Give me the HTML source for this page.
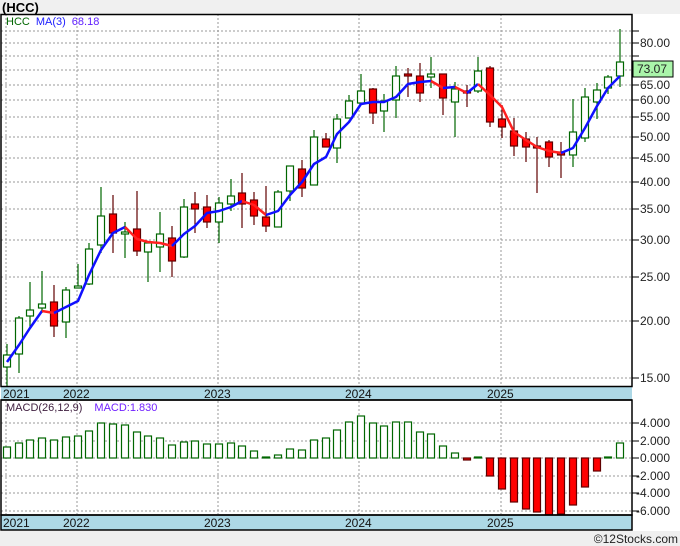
<!DOCTYPE html>
<html><head><meta charset="utf-8"><style>
html,body{margin:0;padding:0;background:#fff;}
svg{display:block;font-family:"Liberation Sans",sans-serif;}
</style></head><body>
<svg width="680" height="546" viewBox="0 0 680 546" xmlns="http://www.w3.org/2000/svg">
<rect x="0" y="0" width="680" height="546" fill="#fff"/>
<rect x="0" y="0" width="680" height="14" fill="#f0f0f0"/>
<text x="2" y="12" font-size="13" font-weight="bold" fill="#000">(HCC)</text>
<rect x="0" y="531" width="680" height="15" fill="#efefef"/>
<text x="678" y="543" font-size="12" fill="#222" text-anchor="end">©12Stocks.com</text>

<!-- price grid -->
<g stroke="#999" stroke-dasharray="2,2" stroke-width="1">
<line x1="1" x2="632" y1="31" y2="31"/><line x1="1" x2="632" y1="43" y2="43"/><line x1="1" x2="632" y1="56" y2="56"/><line x1="1" x2="632" y1="70" y2="70"/><line x1="1" x2="632" y1="85" y2="85"/><line x1="1" x2="632" y1="100" y2="100"/><line x1="1" x2="632" y1="117" y2="117"/><line x1="1" x2="632" y1="137" y2="137"/><line x1="1" x2="632" y1="158" y2="158"/><line x1="1" x2="632" y1="182" y2="182"/><line x1="1" x2="632" y1="209" y2="209"/><line x1="1" x2="632" y1="240" y2="240"/><line x1="1" x2="632" y1="277" y2="277"/><line x1="1" x2="632" y1="321" y2="321"/><line x1="1" x2="632" y1="378" y2="378"/>
<line x1="6" x2="6" y1="14" y2="386"/><line x1="77" x2="77" y1="14" y2="386"/><line x1="218" x2="218" y1="14" y2="386"/><line x1="359" x2="359" y1="14" y2="386"/><line x1="501" x2="501" y1="14" y2="386"/>
<line x1="1" x2="632" y1="423" y2="423"/><line x1="1" x2="632" y1="441" y2="441"/><line x1="1" x2="632" y1="458" y2="458"/><line x1="1" x2="632" y1="476" y2="476"/><line x1="1" x2="632" y1="493" y2="493"/><line x1="1" x2="632" y1="511" y2="511"/>
<line x1="6" x2="6" y1="401" y2="514"/><line x1="77" x2="77" y1="401" y2="514"/><line x1="218" x2="218" y1="401" y2="514"/><line x1="359" x2="359" y1="401" y2="514"/><line x1="501" x2="501" y1="401" y2="514"/>
</g>

<!-- right ticks -->
<g stroke="#000" stroke-width="1">
<line x1="632" x2="639" y1="31" y2="31"/><line x1="632" x2="639" y1="43" y2="43"/><line x1="632" x2="639" y1="56" y2="56"/><line x1="632" x2="639" y1="70" y2="70"/><line x1="632" x2="639" y1="85" y2="85"/><line x1="632" x2="639" y1="100" y2="100"/><line x1="632" x2="639" y1="117" y2="117"/><line x1="632" x2="639" y1="137" y2="137"/><line x1="632" x2="639" y1="158" y2="158"/><line x1="632" x2="639" y1="182" y2="182"/><line x1="632" x2="639" y1="209" y2="209"/><line x1="632" x2="639" y1="240" y2="240"/><line x1="632" x2="639" y1="277" y2="277"/><line x1="632" x2="639" y1="321" y2="321"/><line x1="632" x2="639" y1="378" y2="378"/>
<line x1="632" x2="639" y1="423" y2="423"/><line x1="632" x2="639" y1="441" y2="441"/><line x1="632" x2="639" y1="458" y2="458"/><line x1="632" x2="639" y1="476" y2="476"/><line x1="632" x2="639" y1="493" y2="493"/><line x1="632" x2="639" y1="511" y2="511"/>
</g>
<g font-size="12" fill="#222">
<text x="640" y="47">80.00</text><text x="640" y="89">65.00</text><text x="640" y="104">60.00</text><text x="640" y="121">55.00</text><text x="640" y="141">50.00</text><text x="640" y="162">45.00</text><text x="640" y="186">40.00</text><text x="640" y="213">35.00</text><text x="640" y="244">30.00</text><text x="640" y="281">25.00</text><text x="640" y="325">20.00</text><text x="640" y="382">15.00</text>
<text x="640" y="427">4.000</text><text x="640" y="445">2.000</text><text x="640" y="462">0.000</text><text x="636" y="480">-2.000</text><text x="636" y="497">-4.000</text><text x="636" y="515">-6.000</text>
</g>
<rect x="633" y="61" width="40" height="16" fill="#aaf5aa" stroke="#000"/>
<text x="637" y="73" font-size="12" fill="#222">73.07</text>

<!-- candles -->
<g stroke-width="1.2">
<g stroke="#006600" fill="#fff">
<line x1="7" x2="7" y1="344" y2="387"/><rect x="3.5" y="355" width="7" height="12"/>
<line x1="19" x2="19" y1="316" y2="373"/><rect x="15.5" y="318" width="7" height="36"/>
<line x1="30" x2="30" y1="282" y2="327"/><rect x="26.5" y="310" width="7" height="6"/>
<line x1="42" x2="42" y1="271" y2="313"/><rect x="38.5" y="304" width="7" height="4"/>
<line x1="66" x2="66" y1="287" y2="338"/><rect x="62.5" y="290" width="7" height="32"/>
<line x1="78" x2="78" y1="264" y2="288"/><rect x="74.5" y="286" width="7" height="2"/>
<line x1="89" x2="89" y1="243" y2="285"/><rect x="85.5" y="249" width="7" height="35"/>
<line x1="101" x2="101" y1="187" y2="253"/><rect x="97.5" y="216" width="7" height="29"/>
<line x1="125" x2="125" y1="222" y2="258"/><rect x="121.5" y="232" width="7" height="2"/>
<line x1="148" x2="148" y1="243" y2="282"/><rect x="144.5" y="243" width="7" height="9"/>
<line x1="160" x2="160" y1="212" y2="272"/><rect x="156.5" y="234" width="7" height="13"/>
<line x1="184" x2="184" y1="199" y2="258"/><rect x="180.5" y="207" width="7" height="50"/>
<line x1="219" x2="219" y1="197" y2="243"/><rect x="215.5" y="203" width="7" height="19"/>
<line x1="231" x2="231" y1="179" y2="211"/><rect x="227.5" y="196" width="7" height="8"/>
<line x1="278" x2="278" y1="190" y2="227"/><rect x="274.5" y="192" width="7" height="35"/>
<line x1="290" x2="290" y1="166" y2="201"/><rect x="286.5" y="166" width="7" height="25"/>
<line x1="314" x2="314" y1="130" y2="185"/><rect x="310.5" y="137" width="7" height="48"/>
<line x1="337" x2="337" y1="114" y2="163"/><rect x="333.5" y="119" width="7" height="29"/>
<line x1="349" x2="349" y1="95" y2="118"/><rect x="345.5" y="101" width="7" height="17"/>
<line x1="361" x2="361" y1="74" y2="103"/><rect x="357.5" y="91" width="7" height="12"/>
<line x1="384" x2="384" y1="94" y2="132"/><rect x="380.5" y="101" width="7" height="10"/>
<line x1="396" x2="396" y1="66" y2="118"/><rect x="392.5" y="76" width="7" height="24"/>
<line x1="431" x2="431" y1="57" y2="88"/><rect x="427.5" y="74" width="7" height="3"/>
<line x1="455" x2="455" y1="82" y2="137"/><rect x="451.5" y="89" width="7" height="13"/>
<line x1="478" x2="478" y1="57" y2="93"/><rect x="474.5" y="71" width="7" height="20"/>
<line x1="573" x2="573" y1="99" y2="167"/><rect x="569.5" y="132" width="7" height="23"/>
<line x1="585" x2="585" y1="88" y2="142"/><rect x="581.5" y="97" width="7" height="41"/>
<line x1="597" x2="597" y1="83" y2="119"/><rect x="593.5" y="90" width="7" height="12"/>
<line x1="608" x2="608" y1="75" y2="94"/><rect x="604.5" y="77" width="7" height="11"/>
<line x1="620" x2="620" y1="29" y2="87"/><rect x="616.5" y="62" width="7" height="14"/>
</g>
<g stroke="#600000" fill="#ff0000">
<line x1="54" x2="54" y1="285" y2="337"/><rect x="50.5" y="302" width="7" height="24"/>
<line x1="113" x2="113" y1="195" y2="253"/><rect x="109.5" y="214" width="7" height="19"/>
<line x1="137" x2="137" y1="191" y2="256"/><rect x="133.5" y="229" width="7" height="22"/>
<line x1="172" x2="172" y1="226" y2="277"/><rect x="168.5" y="238" width="7" height="23"/>
<line x1="195" x2="195" y1="192" y2="233"/><rect x="191.5" y="204" width="7" height="5"/>
<line x1="207" x2="207" y1="195" y2="228"/><rect x="203.5" y="207" width="7" height="15"/>
<line x1="242" x2="242" y1="173" y2="228"/><rect x="238.5" y="193" width="7" height="11"/>
<line x1="254" x2="254" y1="192" y2="225"/><rect x="250.5" y="200" width="7" height="16"/>
<line x1="266" x2="266" y1="186" y2="232"/><rect x="262.5" y="217" width="7" height="9"/>
<line x1="302" x2="302" y1="160" y2="197"/><rect x="298.5" y="169" width="7" height="19"/>
<line x1="326" x2="326" y1="133" y2="147"/><rect x="322.5" y="139" width="7" height="8"/>
<line x1="373" x2="373" y1="88" y2="124"/><rect x="369.5" y="89" width="7" height="24"/>
<line x1="408" x2="408" y1="68" y2="97"/><rect x="404.5" y="74" width="7" height="2"/>
<line x1="420" x2="420" y1="63" y2="102"/><rect x="416.5" y="76" width="7" height="17"/>
<line x1="443" x2="443" y1="74" y2="115"/><rect x="439.5" y="74" width="7" height="24"/>
<line x1="467" x2="467" y1="85" y2="107"/><rect x="463.5" y="91" width="7" height="2"/>
<line x1="490" x2="490" y1="66" y2="127"/><rect x="486.5" y="68" width="7" height="54"/>
<line x1="502" x2="502" y1="105" y2="138"/><rect x="498.5" y="119" width="7" height="8"/>
<line x1="514" x2="514" y1="118" y2="156"/><rect x="510.5" y="131" width="7" height="15"/>
<line x1="526" x2="526" y1="132" y2="162"/><rect x="522.5" y="139" width="7" height="8"/>
<line x1="537" x2="537" y1="137" y2="193"/><rect x="533.5" y="146" width="7" height="2"/>
<line x1="549" x2="549" y1="140" y2="167"/><rect x="545.5" y="142" width="7" height="15"/>
<line x1="561" x2="561" y1="142" y2="178"/><rect x="557.5" y="152" width="7" height="3"/>
</g>
</g>

<!-- MA -->
<g fill="none" stroke-width="2.5" stroke-linejoin="round">
<polyline stroke="#1010ff" points="7,362 19,345 30,328 42,311"/>
<polyline stroke="#ff2020" points="42,311 54,313"/>
<polyline stroke="#1010ff" points="54,313 66,307 78,301 89,275 101,250 113,233 125,227"/>
<polyline stroke="#ff2020" points="125,227 137,239 148,242 160,243 172,246"/>
<polyline stroke="#1010ff" points="172,246 184,234 195,226 207,213 219,211 231,207 242,201"/>
<polyline stroke="#ff2020" points="242,201 254,205 266,215"/>
<polyline stroke="#1010ff" points="266,215 278,211 290,195 302,182 314,164 326,157 337,134 349,122 361,104 373,102 384,102 396,97 408,84 420,82 431,81"/>
<polyline stroke="#ff2020" points="431,81 443,88"/>
<polyline stroke="#1010ff" points="443,88 455,87"/>
<polyline stroke="#ff2020" points="455,87 467,93"/>
<polyline stroke="#1010ff" points="467,93 478,84"/>
<polyline stroke="#ff2020" points="478,84 490,95 502,107 514,132 526,140 537,147 549,151 561,153"/>
<polyline stroke="#1010ff" points="561,153 573,148 585,128 597,106 608,88 620,76"/>
</g>

<!-- MACD bars -->
<g stroke="#006600" fill="#fff" stroke-width="1.2">
<rect x="3.5" y="447" width="7" height="11"/><rect x="15.5" y="443" width="7" height="15"/><rect x="26.5" y="440" width="7" height="18"/><rect x="38.5" y="438" width="7" height="20"/><rect x="50.5" y="440" width="7" height="18"/><rect x="62.5" y="437" width="7" height="21"/><rect x="74.5" y="436" width="7" height="22"/><rect x="85.5" y="431" width="7" height="27"/><rect x="97.5" y="423" width="7" height="35"/><rect x="109.5" y="424" width="7" height="34"/><rect x="121.5" y="425" width="7" height="33"/><rect x="133.5" y="432" width="7" height="26"/><rect x="144.5" y="436" width="7" height="22"/><rect x="156.5" y="438" width="7" height="20"/><rect x="168.5" y="445" width="7" height="13"/><rect x="180.5" y="442" width="7" height="16"/><rect x="191.5" y="441" width="7" height="17"/><rect x="203.5" y="444" width="7" height="14"/><rect x="215.5" y="444" width="7" height="14"/><rect x="227.5" y="443" width="7" height="15"/><rect x="238.5" y="446" width="7" height="12"/><rect x="250.5" y="451" width="7" height="7"/><rect x="262.5" y="457" width="7" height="1"/><rect x="274.5" y="455" width="7" height="3"/><rect x="286.5" y="449" width="7" height="9"/><rect x="298.5" y="450" width="7" height="8"/><rect x="310.5" y="440" width="7" height="18"/><rect x="322.5" y="438" width="7" height="20"/><rect x="333.5" y="430" width="7" height="28"/><rect x="345.5" y="422" width="7" height="36"/><rect x="357.5" y="416" width="7" height="42"/><rect x="369.5" y="423" width="7" height="35"/><rect x="380.5" y="426" width="7" height="32"/><rect x="392.5" y="422" width="7" height="36"/><rect x="404.5" y="422" width="7" height="36"/><rect x="416.5" y="432" width="7" height="26"/><rect x="427.5" y="434" width="7" height="24"/><rect x="439.5" y="446" width="7" height="12"/><rect x="451.5" y="453" width="7" height="5"/><rect x="474.5" y="457" width="7" height="1"/><rect x="604.5" y="457" width="7" height="1"/><rect x="616.5" y="443" width="7" height="15"/>
</g>
<g stroke="#600000" fill="#ff0000" stroke-width="1.2">
<rect x="463.5" y="458" width="7" height="2"/><rect x="486.5" y="458" width="7" height="18"/><rect x="498.5" y="458" width="7" height="31"/><rect x="510.5" y="458" width="7" height="44"/><rect x="522.5" y="458" width="7" height="51"/><rect x="533.5" y="458" width="7" height="54"/><rect x="545.5" y="458" width="7" height="57"/><rect x="557.5" y="458" width="7" height="56"/><rect x="569.5" y="458" width="7" height="47"/><rect x="581.5" y="458" width="7" height="29"/><rect x="593.5" y="458" width="7" height="13"/>
</g>

<!-- legends -->
<text x="6" y="25" font-size="11"><tspan fill="#006600">HCC</tspan><tspan fill="#2020ff" dx="6">MA(3)</tspan><tspan fill="#6020ff" dx="6">68.18</tspan></text>
<text x="6" y="411" font-size="11"><tspan fill="#402040">MACD(26,12,9)</tspan><tspan fill="#7020ff" dx="12">MACD:1.830</tspan></text>

<!-- axis bands -->
<rect x="1" y="387" width="631" height="13" fill="#add8e6"/>
<rect x="1" y="515" width="631" height="15" fill="#add8e6"/>
<g font-size="12" fill="#111">
<text x="3" y="398">2021</text><text x="63" y="398">2022</text><text x="204" y="398">2023</text><text x="345" y="398">2024</text><text x="487" y="398">2025</text>
<text x="3" y="527">2021</text><text x="63" y="527">2022</text><text x="204" y="527">2023</text><text x="345" y="527">2024</text><text x="487" y="527">2025</text>
</g>
<!-- frames -->
<g stroke="#000" stroke-width="1.5" fill="none">
<rect x="1" y="14.5" width="631" height="372"/>
<line x1="1" x2="632" y1="400" y2="400"/>
<rect x="1" y="400" width="631" height="115"/>
<rect x="1" y="515" width="631" height="15"/>
</g>
</svg>
</body></html>
